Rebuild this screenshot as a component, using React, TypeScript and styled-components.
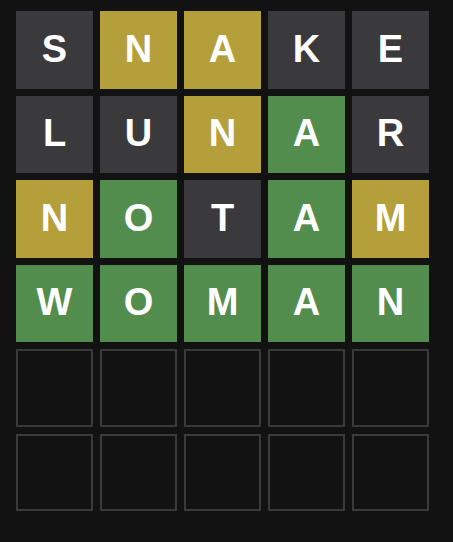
import React from "react";
import styled, { createGlobalStyle } from "styled-components";

type State = "absent" | "present" | "correct" | "empty";

const GlobalStyle = createGlobalStyle`
  html, body {
    margin: 0;
    padding: 0;
    background: #121213;
    width: 100%;
    height: 100%;
  }
  #root {
    min-height: 100vh;
    background: #121213;
  }
`;

const Page = styled.div`
  background: #121213;
  height: 542px;
  padding: 11px 0 0 16px;
  box-sizing: border-box;
`;

const Board = styled.div`
  display: grid;
  grid-template-columns: repeat(5, 77px);
  grid-template-rows: repeat(6, 77.5px);
  gap: 7px;
`;

const colors: Record<State, string> = {
  absent: "#3a3a3c",
  present: "#b59f3b",
  correct: "#538d4e",
  empty: "#121213",
};

const Tile = styled.div<{ $state: State }>`
  box-sizing: border-box;
  display: flex;
  align-items: center;
  justify-content: center;
  padding-bottom: 2px;
  background: ${(p) => colors[p.$state]};
  border: ${(p) => (p.$state === "empty" ? "2px solid #3a3a3c" : "none")};
  color: #ffffff;
  font-family: "Liberation Sans", Arial, sans-serif;
  font-weight: 700;
  font-size: 38px;
  line-height: 1;
  text-transform: uppercase;
`;

const rows: { word: string; states: State[] }[] = [
  { word: "SNAKE", states: ["absent", "present", "present", "absent", "absent"] },
  { word: "LUNAR", states: ["absent", "absent", "present", "correct", "absent"] },
  { word: "NOTAM", states: ["present", "correct", "absent", "correct", "present"] },
  { word: "WOMAN", states: ["correct", "correct", "correct", "correct", "correct"] },
  { word: "     ", states: ["empty", "empty", "empty", "empty", "empty"] },
  { word: "     ", states: ["empty", "empty", "empty", "empty", "empty"] },
];

export default function App() {
  return (
    <>
      <GlobalStyle />
      <Page>
        <Board>
          {rows.map((r, ri) =>
            r.states.map((s, ci) => (
              <Tile key={`${ri}-${ci}`} $state={s}>
                {r.word[ci].trim()}
              </Tile>
            ))
          )}
        </Board>
      </Page>
    </>
  );
}
